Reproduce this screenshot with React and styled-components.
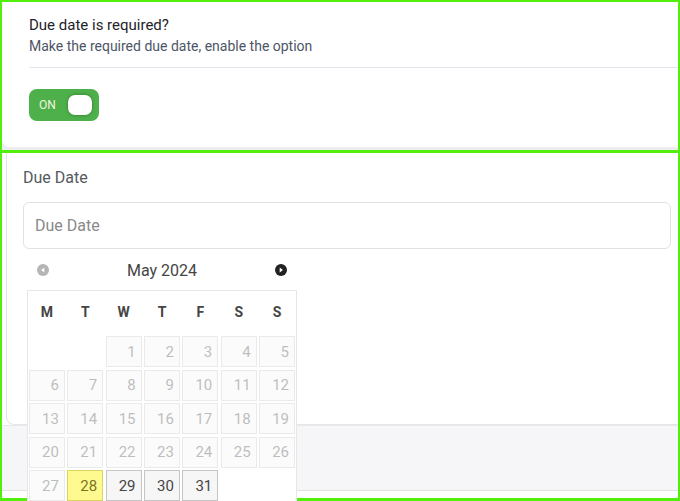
import React from "react";
import styled, { createGlobalStyle } from "styled-components";

const GlobalStyle = createGlobalStyle`
  html, body {
    margin: 0;
    padding: 0;
    background: #ffffff;
  }
  body {
    font-family: Roboto, "Liberation Sans", Arial, sans-serif;
  }
  * {
    box-sizing: border-box;
  }
`;

const Page = styled.div`
  width: 680px;
  height: 501px;
  overflow: hidden;
  display: flex;
  flex-direction: column;
`;

const OptionPanel = styled.section`
  height: 153px;
  border: 2px solid #52ef0c;
  border-bottom-width: 3px;
  background: #eceef4;
  padding-bottom: 3px;
`;

const OptionCard = styled.div`
  height: 100%;
  background: #ffffff;
  border-radius: 0 0 0 8px;
  padding: 13px 0 0 27px;
`;

const OptionTitle = styled.div`
  font-size: 15px;
  line-height: 21px;
  color: #1f2328;
`;

const OptionHint = styled.div`
  font-size: 14px;
  line-height: 21px;
  color: #4d5566;
`;

const Divider = styled.hr`
  border: 0;
  border-top: 1px solid #e3e3ec;
  margin: 10px 0 21px;
`;

const Toggle = styled.button`
  width: 70px;
  height: 32px;
  border: 0;
  border-radius: 8px;
  background: #4eb04a;
  display: flex;
  align-items: center;
  justify-content: space-between;
  padding: 0 7px 0 10px;
  cursor: pointer;
  font-family: inherit;
`;

const ToggleLabel = styled.span`
  font-size: 12px;
  color: #eef6dc;
`;

const Knob = styled.span`
  width: 24px;
  height: 20px;
  border-radius: 7px;
  background: #ffffff;
  box-shadow: 0 0 3px rgba(20, 80, 20, 0.6);
`;

const DatePanel = styled.section`
  flex: 1;
  display: flex;
  flex-direction: column;
  border: 2px solid #52ef0c;
  border-top: 0;
  border-bottom-width: 3px;
  background: #ffffff;
`;

const DateCard = styled.div`
  height: 272px;
  margin-left: 4px;
  border-left: 1px solid #e3e3e3;
  border-bottom: 1px solid #e6e6e9;
  border-radius: 0 0 0 8px;
  padding: 15px 7px 0 16px;
`;

const FieldLabel = styled.div`
  font-size: 16px;
  line-height: 19px;
  color: #555a60;
  margin-bottom: 15px;
`;

const FieldWrap = styled.div`
  position: relative;
`;

const DateInput = styled.input`
  width: 100%;
  height: 47px;
  border: 1px solid #e2e2e2;
  border-radius: 6px;
  padding: 0 11px;
  font-family: inherit;
  font-size: 16px;
  color: #333;
  outline: none;

  &::placeholder {
    color: #8a8a8a;
  }
`;

const Picker = styled.div`
  position: absolute;
  top: calc(100% + 5px);
  left: 4px;
  width: 270px;
  z-index: 2;
`;

const PickerHeader = styled.div`
  height: 32px;
  margin-bottom: 4px;
  display: flex;
  align-items: center;
  justify-content: space-between;
  padding: 0 10px;
`;

const MonthTitle = styled.span`
  font-size: 16px;
  color: #454545;
`;

const NavIcon = styled.svg`
  width: 12px;
  height: 12px;
  display: block;
`;

const PickerBody = styled.div`
  background: #ffffff;
  border: 1px solid #e6e6e6;
  padding: 0 1px 1px;
  display: grid;
  grid-template-columns: repeat(7, 1fr);
  gap: 2.5px;
`;

const WeekDay = styled.div`
  height: 42.5px;
  display: flex;
  align-items: center;
  justify-content: center;
  font-size: 14px;
  font-weight: 700;
  color: #454545;
`;

const cellColors = {
  disabled: { bg: "#f6f6f6", border: "#c5c5c5", text: "#454545", opacity: 0.35 },
  normal: { bg: "#f6f6f6", border: "#c5c5c5", text: "#454545", opacity: 1 },
  today: { bg: "#fffa90", border: "#dad55e", text: "#777620", opacity: 1 },
};

const DayCell = styled.div`
  height: 31px;
  display: flex;
  align-items: center;
  justify-content: flex-end;
  padding-right: 5px;
  font-size: 15px;
  background: ${(p) => cellColors[p.$state].bg};
  border: 1px solid ${(p) => cellColors[p.$state].border};
  color: ${(p) => cellColors[p.$state].text};
  opacity: ${(p) => cellColors[p.$state].opacity};
`;

const EmptyCell = styled.div`
  height: 31px;
`;

const FooterBand = styled.div`
  height: 66px;
  background: #f6f6f8;
  border-top: 1px solid #e9e9ec;
  border-bottom: 1px solid #e2e2e5;
`;

const weekDays = ["M", "T", "W", "T", "F", "S", "S"];

const PrevIcon = () => (
  <NavIcon viewBox="0 0 12 12">
    <circle cx="6" cy="6" r="6" fill="#b5b5b5" />
    <path d="M7.3 3.4 L4.1 6 L7.3 8.6 Z" fill="#ffffff" />
  </NavIcon>
);

const NextIcon = () => (
  <NavIcon viewBox="0 0 12 12">
    <circle cx="6" cy="6" r="6" fill="#222222" />
    <path d="M4.7 3.4 L7.9 6 L4.7 8.6 Z" fill="#ffffff" />
  </NavIcon>
);

const App = () => {
  const today = 28;
  const days = [];
  for (let i = 0; i < 2; i++) days.push(null);
  for (let d = 1; d <= 31; d++) days.push(d);

  return (
    <>
      <GlobalStyle />
      <Page>
        <OptionPanel>
          <OptionCard>
            <OptionTitle>Due date is required?</OptionTitle>
            <OptionHint>Make the required due date, enable the option</OptionHint>
            <Divider />
            <Toggle type="button">
              <ToggleLabel>ON</ToggleLabel>
              <Knob />
            </Toggle>
          </OptionCard>
        </OptionPanel>

        <DatePanel>
          <DateCard>
            <FieldLabel>Due Date</FieldLabel>
            <FieldWrap>
              <DateInput placeholder="Due Date" />
              <Picker>
                <PickerHeader>
                  <PrevIcon />
                  <MonthTitle>May 2024</MonthTitle>
                  <NextIcon />
                </PickerHeader>
                <PickerBody>
                  {weekDays.map((w, i) => (
                    <WeekDay key={"w" + i}>{w}</WeekDay>
                  ))}
                  {days.map((d, i) =>
                    d === null ? (
                      <EmptyCell key={"e" + i} />
                    ) : (
                      <DayCell
                        key={d}
                        $state={d < today ? "disabled" : d === today ? "today" : "normal"}
                      >
                        {d}
                      </DayCell>
                    )
                  )}
                </PickerBody>
              </Picker>
            </FieldWrap>
          </DateCard>
          <FooterBand />
        </DatePanel>
      </Page>
    </>
  );
};

export default App;
